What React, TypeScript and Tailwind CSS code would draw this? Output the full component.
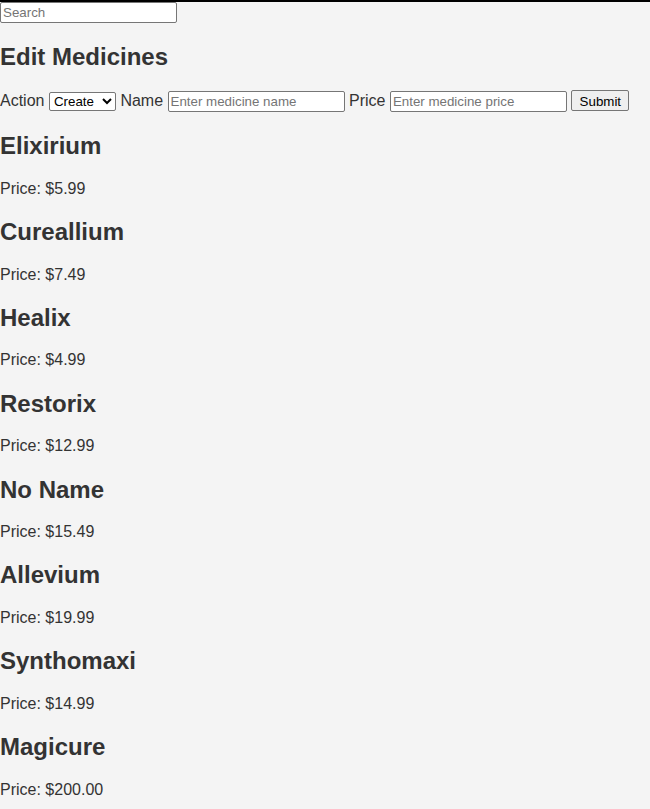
import React from 'react';

const medicines = [
  { name: 'Elixirium', price: 5.99 },
  { name: 'Cureallium', price: 7.49 },
  { name: 'Healix', price: 4.99 },
  { name: 'Restorix', price: 12.99 },
  { name: 'No Name', price: 15.49 },
  { name: 'Allevium', price: 19.99 },
  { name: 'Synthomaxi', price: 14.99 },
  { name: 'Magicure', price: 200.0 },
];

const inputCls =
  'w-[177px] h-[21px] align-baseline bg-white border border-[#767676] rounded-[2px] px-[2px] text-[13.33px] text-black placeholder:text-[#757575] font-["Liberation_Sans",Arial,sans-serif]';

export default function App() {
  return (
    <div className="min-h-screen bg-[#f4f4f4] border-t-2 border-black text-[#333] font-['Liberation_Sans',Arial,sans-serif] text-[16px] leading-[18.4px]">
      <input type="text" placeholder="Search" className={inputCls} />
      <h2 className="text-[24px] font-bold leading-[27.6px] my-[19.92px]">Edit Medicines</h2>
      <form className="leading-[21px]" onSubmit={(e) => e.preventDefault()}>
        <label>Action</label>{' '}
        <select className="h-[19px] w-[67px] bg-white border border-[#767676] rounded-[2px] text-[13.33px] text-black align-baseline">
          <option>Create</option>
          <option>Update</option>
          <option>Delete</option>
        </select>{' '}
        <label>Name</label>{' '}
        <input type="text" placeholder="Enter medicine name" className={inputCls} />{' '}
        <label>Price</label>{' '}
        <input type="text" placeholder="Enter medicine price" className={inputCls} />{' '}
        <button
          type="submit"
          className="h-[21px] w-[58px] bg-[#efefef] border border-[#767676] rounded-[2px] text-[13.33px] text-black align-baseline"
        >
          Submit
        </button>
      </form>
      <div>
        {medicines.map((m) => (
          <div key={m.name}>
            <h2 className="text-[24px] font-bold leading-[27.6px] my-[19.92px]">{m.name}</h2>
            <p className="my-[16px]">Price: ${m.price.toFixed(2)}</p>
          </div>
        ))}
      </div>
    </div>
  );
}
